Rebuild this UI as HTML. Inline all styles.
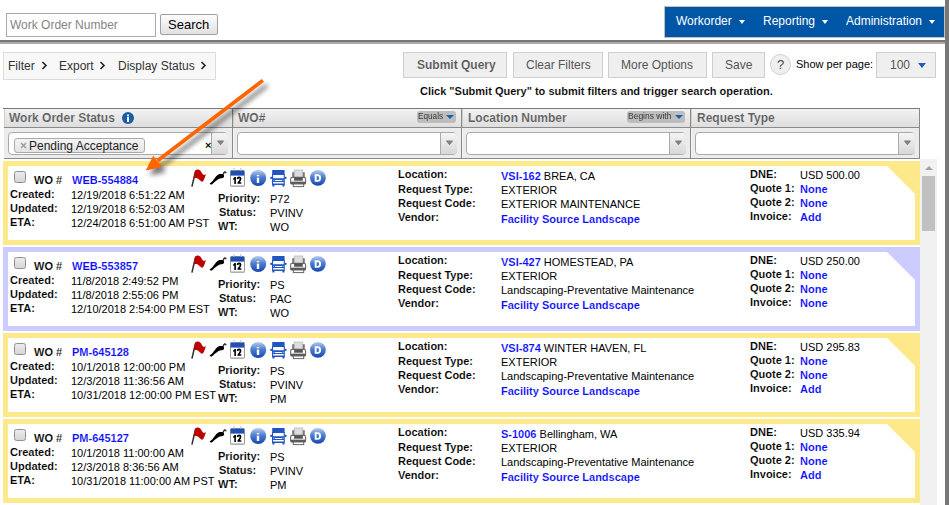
<!DOCTYPE html>
<html><head><meta charset="utf-8"><style>
html,body{margin:0;padding:0;background:#fff;width:949px;height:505px;overflow:hidden;position:relative}
body{font-family:'Liberation Sans',sans-serif;}
.t{position:absolute;white-space:nowrap;line-height:14px;font-family:'Liberation Sans',sans-serif;}
</style></head><body>
<div style="position:absolute;left:6px;top:13px;width:148px;height:22px;border:1px solid #a9a9a9;background:#fff"></div>
<div class="t" style="left:10px;top:18px;font-size:12px;font-weight:normal;color:#848484;">Work Order Number</div>
<div style="position:absolute;left:160px;top:14px;width:56px;height:19px;border:1px solid #a0a0a0;border-radius:2px;background:linear-gradient(#fdfdfd,#e1e1e1)"></div>
<div class="t" style="left:168px;top:18px;font-size:13px;font-weight:normal;color:#000;">Search</div>
<div style="position:absolute;left:664px;top:6px;width:281px;height:32px;background:#0056a6;border:1px solid #c4c0bc;box-sizing:border-box"></div>
<div class="t" style="left:676px;top:14px;font-size:12px;font-weight:normal;color:#fff;">Workorder</div>
<div class="t" style="left:763px;top:14px;font-size:12px;font-weight:normal;color:#fff;">Reporting</div>
<div class="t" style="left:846px;top:14px;font-size:12px;font-weight:normal;color:#fff;">Administration</div>
<div style="position:absolute;left:739px;top:20px;width:0;height:0;border-left:3px solid transparent;border-right:3px solid transparent;border-top:4px solid #fff"></div>
<div style="position:absolute;left:822px;top:20px;width:0;height:0;border-left:3px solid transparent;border-right:3px solid transparent;border-top:4px solid #fff"></div>
<div style="position:absolute;left:929px;top:20px;width:0;height:0;border-left:3px solid transparent;border-right:3px solid transparent;border-top:4px solid #fff"></div>
<div style="position:absolute;left:0px;top:40px;width:945px;height:2px;background:#777"></div>
<div style="position:absolute;left:0px;top:42px;width:945px;height:2px;background:#aaa"></div>
<div style="position:absolute;left:945px;top:0px;width:4px;height:505px;background:#787878"></div>
<div style="position:absolute;left:3px;top:52px;width:211px;height:26px;border:1px solid #dcdcdc;background:#f8f8f8"></div>
<div class="t" style="left:8px;top:59px;font-size:12px;font-weight:normal;color:#333;">Filter</div>
<div class="t" style="left:59px;top:59px;font-size:12px;font-weight:normal;color:#333;">Export</div>
<div class="t" style="left:118px;top:59px;font-size:12px;font-weight:normal;color:#333;">Display Status</div>
<svg style="position:absolute;left:41px;top:61px" width="7" height="9"><path d="M1.5 1 L5 4.5 L1.5 8" fill="none" stroke="#222" stroke-width="1.6"/></svg>
<svg style="position:absolute;left:99px;top:61px" width="7" height="9"><path d="M1.5 1 L5 4.5 L1.5 8" fill="none" stroke="#222" stroke-width="1.6"/></svg>
<svg style="position:absolute;left:200px;top:61px" width="7" height="9"><path d="M1.5 1 L5 4.5 L1.5 8" fill="none" stroke="#222" stroke-width="1.6"/></svg>
<div style="position:absolute;left:403px;top:52px;width:104px;height:26px;border:1px solid #cfcfcf;background:#efefef;box-sizing:border-box"></div>
<div class="t" style="left:417px;top:58px;font-size:12px;font-weight:bold;color:#555;-webkit-text-stroke:0.12px #efefef;">Submit Query</div>
<div style="position:absolute;left:513px;top:52px;width:90px;height:26px;border:1px solid #cfcfcf;background:#efefef;box-sizing:border-box"></div>
<div class="t" style="left:526px;top:58px;font-size:12px;font-weight:normal;color:#555;">Clear Filters</div>
<div style="position:absolute;left:608px;top:52px;width:99px;height:26px;border:1px solid #cfcfcf;background:#efefef;box-sizing:border-box"></div>
<div class="t" style="left:621px;top:58px;font-size:12px;font-weight:normal;color:#555;">More Options</div>
<div style="position:absolute;left:712px;top:52px;width:53px;height:26px;border:1px solid #cfcfcf;background:#efefef;box-sizing:border-box"></div>
<div class="t" style="left:725px;top:58px;font-size:12px;font-weight:normal;color:#555;">Save</div>
<div style="position:absolute;left:770px;top:54px;width:21px;height:21px;border:1px solid #cfcfcf;background:#efefef;border-radius:50%;box-sizing:border-box"></div>
<div class="t" style="left:777px;top:58px;font-size:13px;font-weight:normal;color:#444;">?</div>
<div class="t" style="left:796px;top:57px;font-size:11px;font-weight:normal;color:#000;">Show per page:</div>
<div style="position:absolute;left:876px;top:52px;width:60px;height:26px;border:1px solid #cfcfcf;background:#efefef;box-sizing:border-box"></div>
<div class="t" style="left:890px;top:58px;font-size:12px;font-weight:normal;color:#555;">100</div>
<div style="position:absolute;left:918px;top:63px;width:0;height:0;border-left:4px solid transparent;border-right:4px solid transparent;border-top:5px solid #1f5fb0"></div>
<div class="t" style="left:420px;top:84px;font-size:11px;font-weight:bold;color:#000;-webkit-text-stroke:0.12px #fff;">Click "Submit Query" to submit filters and trigger search operation.</div>
<div style="position:absolute;left:4px;top:108px;width:916px;height:51px;border:1px solid #8a8a8a;border-left:none;border-top-color:#7a7a7a;box-sizing:border-box;background:#ececec"></div>
<div style="position:absolute;left:3px;top:108px;width:1px;height:1px;background:#7a7a7a"></div>
<div style="position:absolute;left:4px;top:109px;width:915px;height:18px;background:linear-gradient(#f2f2f2,#dedede);border-left:1px solid #cfcfcf;box-sizing:border-box"></div>
<div style="position:absolute;left:4px;top:127px;width:916px;height:1px;background:#8a8a8a"></div>
<div style="position:absolute;left:232px;top:109px;width:1px;height:49px;background:#8a8a8a"></div>
<div style="position:absolute;left:233px;top:109px;width:1px;height:18px;background:#cfcfcf"></div>
<div style="position:absolute;left:233px;top:128px;width:1px;height:30px;background:#f4f4f4"></div>
<div style="position:absolute;left:461px;top:109px;width:1px;height:49px;background:#8a8a8a"></div>
<div style="position:absolute;left:462px;top:109px;width:1px;height:18px;background:#cfcfcf"></div>
<div style="position:absolute;left:462px;top:128px;width:1px;height:30px;background:#f4f4f4"></div>
<div style="position:absolute;left:690px;top:109px;width:1px;height:49px;background:#8a8a8a"></div>
<div style="position:absolute;left:691px;top:109px;width:1px;height:18px;background:#cfcfcf"></div>
<div style="position:absolute;left:691px;top:128px;width:1px;height:30px;background:#f4f4f4"></div>
<div class="t" style="left:9px;top:111px;font-size:12px;font-weight:bold;color:#5e5e5e;-webkit-text-stroke:0.12px #e8e8e8;">Work Order Status</div>
<svg style="position:absolute;left:122px;top:112px" width="12" height="12"><circle cx="6" cy="6" r="6" fill="#1a5ea8"/><rect x="5" y="5" width="2" height="5" fill="#fff"/><rect x="5" y="2.5" width="2" height="1.8" fill="#fff"/></svg>
<div class="t" style="left:238px;top:111px;font-size:12px;font-weight:bold;color:#5e5e5e;-webkit-text-stroke:0.12px #e8e8e8;">WO#</div>
<div class="t" style="left:468px;top:111px;font-size:12px;font-weight:bold;color:#5e5e5e;-webkit-text-stroke:0.12px #e8e8e8;">Location Number</div>
<div class="t" style="left:697px;top:111px;font-size:12px;font-weight:bold;color:#5e5e5e;-webkit-text-stroke:0.12px #e8e8e8;">Request Type</div>
<div style="position:absolute;left:417px;top:111px;width:39px;height:12px;background:#bdbdbd;border-radius:3px"></div>
<div class="t" style="left:418px;top:109px;font-size:9px;line-height:14px;color:#383838;transform:scaleX(0.913);transform-origin:0 0">Equals</div>
<div style="position:absolute;left:446px;top:115px;width:0;height:0;border-left:4px solid transparent;border-right:4px solid transparent;border-top:4px solid #1f5fb0"></div>
<div style="position:absolute;left:627px;top:111px;width:58px;height:12px;background:#bdbdbd;border-radius:3px"></div>
<div class="t" style="left:628px;top:109px;font-size:9px;line-height:14px;color:#383838;transform:scaleX(0.943);transform-origin:0 0">Begins with</div>
<div style="position:absolute;left:675px;top:115px;width:0;height:0;border-left:4px solid transparent;border-right:4px solid transparent;border-top:4px solid #1f5fb0"></div>
<div style="position:absolute;left:8px;top:132px;width:220px;height:23px;border:1px solid #aaa;border-radius:4px;background:#fff;box-sizing:border-box"></div>
<div style="position:absolute;left:211px;top:133px;width:16px;height:21px;border-left:1px solid #aaa;border-radius:0 3px 3px 0;background:linear-gradient(#f4f4f4,#d8d8d8)"></div>
<svg style="position:absolute;left:217px;top:140px" width="7" height="6"><path d="M0.3 0.5 H6.7 V1.6 L3.5 5.2 L0.3 1.6 Z" fill="#808080"/></svg>
<div style="position:absolute;left:237px;top:132px;width:220px;height:23px;border:1px solid #aaa;border-radius:4px;background:#fff;box-sizing:border-box"></div>
<div style="position:absolute;left:440px;top:133px;width:16px;height:21px;border-left:1px solid #aaa;border-radius:0 3px 3px 0;background:linear-gradient(#f4f4f4,#d8d8d8)"></div>
<svg style="position:absolute;left:446px;top:140px" width="7" height="6"><path d="M0.3 0.5 H6.7 V1.6 L3.5 5.2 L0.3 1.6 Z" fill="#808080"/></svg>
<div style="position:absolute;left:466px;top:132px;width:220px;height:23px;border:1px solid #aaa;border-radius:4px;background:#fff;box-sizing:border-box"></div>
<div style="position:absolute;left:669px;top:133px;width:16px;height:21px;border-left:1px solid #aaa;border-radius:0 3px 3px 0;background:linear-gradient(#f4f4f4,#d8d8d8)"></div>
<svg style="position:absolute;left:675px;top:140px" width="7" height="6"><path d="M0.3 0.5 H6.7 V1.6 L3.5 5.2 L0.3 1.6 Z" fill="#808080"/></svg>
<div style="position:absolute;left:695px;top:132px;width:220px;height:23px;border:1px solid #aaa;border-radius:4px;background:#fff;box-sizing:border-box"></div>
<div style="position:absolute;left:898px;top:133px;width:16px;height:21px;border-left:1px solid #aaa;border-radius:0 3px 3px 0;background:linear-gradient(#f4f4f4,#d8d8d8)"></div>
<svg style="position:absolute;left:904px;top:140px" width="7" height="6"><path d="M0.3 0.5 H6.7 V1.6 L3.5 5.2 L0.3 1.6 Z" fill="#808080"/></svg>
<div style="position:absolute;left:14px;top:138px;width:131px;height:15px;border:1px solid #aaa;border-radius:3px;background:linear-gradient(#f4f4f4,#e4e4e4);box-sizing:border-box"></div>
<svg style="position:absolute;left:20px;top:142px" width="7" height="7"><path d="M1 1L6 6M6 1L1 6" stroke="#999" stroke-width="1.4"/></svg>
<div class="t" style="left:29px;top:139px;font-size:12px;font-weight:normal;color:#222;">Pending Acceptance</div>
<div class="t" style="left:205px;top:138px;font-size:11px;font-weight:bold;color:#111;">×</div>
<div style="position:absolute;left:920px;top:159px;width:17px;height:346px;background:#f1f1f1"></div>
<div style="position:absolute;left:924.5px;top:165.5px;width:0;height:0;border-left:4px solid transparent;border-right:4px solid transparent;border-bottom:4.5px solid #a3a3a3"></div>
<div style="position:absolute;left:922px;top:176px;width:13px;height:55px;background:#c1c1c1"></div>
<div style="position:absolute;left:3px;top:161px;width:917px;height:84px;background:#fee98a"></div>
<div style="position:absolute;left:8px;top:166px;width:907px;height:74px;background:#fff;clip-path:polygon(0 0,879px 0,907px 28px,907px 74px,0 74px)"></div>
<div style="position:absolute;left:14px;top:171px;width:12px;height:12px;border:1px solid #8e8e8e;border-radius:2.5px;background:linear-gradient(#ececec,#d6d6d6);box-sizing:border-box"></div>
<div class="t" style="left:34px;top:173px;font-size:11px;font-weight:bold;color:#000;-webkit-text-stroke:0.12px #fff;">WO #</div>
<div class="t" style="left:72px;top:173px;font-size:11px;font-weight:bold;color:#0a0aff;-webkit-text-stroke:0.12px #fff;">WEB-554884</div>
<div class="t" style="left:10px;top:187px;font-size:11px;font-weight:bold;color:#000;-webkit-text-stroke:0.12px #fff;">Created:</div>
<div class="t" style="left:71px;top:188px;font-size:11px;font-weight:normal;color:#000;">12/19/2018 6:51:22 AM</div>
<div class="t" style="left:10px;top:201px;font-size:11px;font-weight:bold;color:#000;-webkit-text-stroke:0.12px #fff;">Updated:</div>
<div class="t" style="left:71px;top:202px;font-size:11px;font-weight:normal;color:#000;">12/19/2018 6:52:03 AM</div>
<div class="t" style="left:10px;top:215px;font-size:11px;font-weight:bold;color:#000;-webkit-text-stroke:0.12px #fff;">ETA:</div>
<div class="t" style="left:71px;top:216px;font-size:11px;font-weight:normal;color:#000;">12/24/2018 6:51:00 AM PST</div>
<div class="t" style="left:218px;top:191px;font-size:11px;font-weight:bold;color:#000;-webkit-text-stroke:0.12px #fff;">Priority:</div>
<div class="t" style="left:270px;top:192px;font-size:11px;font-weight:normal;color:#000;">P72</div>
<div class="t" style="left:219px;top:205px;font-size:11px;font-weight:bold;color:#000;-webkit-text-stroke:0.12px #fff;">Status:</div>
<div class="t" style="left:270px;top:206px;font-size:11px;font-weight:normal;color:#000;">PVINV</div>
<div class="t" style="left:218px;top:219px;font-size:11px;font-weight:bold;color:#000;-webkit-text-stroke:0.12px #fff;">WT:</div>
<div class="t" style="left:270px;top:220px;font-size:11px;font-weight:normal;color:#000;">WO</div>
<div class="t" style="left:398px;top:167px;font-size:11px;font-weight:bold;color:#000;-webkit-text-stroke:0.12px #fff;">Location:</div>
<div class="t" style="left:501px;top:169px;font-size:11px;font-weight:normal;color:#000;"><b style="color:#0a0aff;-webkit-text-stroke:0.12px #fff">VSI-162</b> BREA, CA</div>
<div class="t" style="left:398px;top:182px;font-size:11px;font-weight:bold;color:#000;-webkit-text-stroke:0.12px #fff;">Request Type:</div>
<div class="t" style="left:501px;top:183px;font-size:11px;font-weight:normal;color:#000;">EXTERIOR</div>
<div class="t" style="left:398px;top:196px;font-size:11px;font-weight:bold;color:#000;-webkit-text-stroke:0.12px #fff;">Request Code:</div>
<div class="t" style="left:501px;top:197px;font-size:11px;font-weight:normal;color:#000;">EXTERIOR MAINTENANCE</div>
<div class="t" style="left:398px;top:210px;font-size:11px;font-weight:bold;color:#000;-webkit-text-stroke:0.12px #fff;">Vendor:</div>
<div class="t" style="left:501px;top:212px;font-size:11px;font-weight:bold;color:#0a0aff;-webkit-text-stroke:0.12px #fff;">Facility Source Landscape</div>
<div class="t" style="left:750px;top:167px;font-size:11px;font-weight:bold;color:#000;-webkit-text-stroke:0.12px #fff;">DNE:</div>
<div class="t" style="left:800px;top:168px;font-size:11px;font-weight:normal;color:#000;">USD 500.00</div>
<div class="t" style="left:750px;top:181px;font-size:11px;font-weight:bold;color:#000;-webkit-text-stroke:0.12px #fff;">Quote 1:</div>
<div class="t" style="left:800px;top:182px;font-size:11px;font-weight:bold;color:#0a0aff;-webkit-text-stroke:0.12px #fff;">None</div>
<div class="t" style="left:750px;top:195px;font-size:11px;font-weight:bold;color:#000;-webkit-text-stroke:0.12px #fff;">Quote 2:</div>
<div class="t" style="left:800px;top:196px;font-size:11px;font-weight:bold;color:#0a0aff;-webkit-text-stroke:0.12px #fff;">None</div>
<div class="t" style="left:750px;top:209px;font-size:11px;font-weight:bold;color:#000;-webkit-text-stroke:0.12px #fff;">Invoice:</div>
<div class="t" style="left:800px;top:210px;font-size:11px;font-weight:bold;color:#0a0aff;-webkit-text-stroke:0.12px #fff;">Add</div>
<svg style="position:absolute;left:188px;top:166px" width="145" height="25" viewBox="0 0 145 25">
<defs>
<linearGradient id="bg161" x1="0" y1="0" x2="0" y2="1"><stop offset="0" stop-color="#b9cdee"/><stop offset="0.45" stop-color="#4f7fd0"/><stop offset="1" stop-color="#1546b0"/></linearGradient>
</defs>
<path d="M3.9 20.6 L7.6 5" stroke="#2e2e2e" stroke-width="1.5" fill="none"/>
<path d="M7.3 4.2 C9 3.2 11 3.4 12.2 4.6 C13.3 5.8 14.5 8.5 15.8 8.9 L17.9 8.2 L17 11 C16.2 13.5 15.2 15.5 14.2 15.8 C13 15.5 12 14.4 11 13.5 C9.6 12.2 7.8 11.6 5.5 12.6 Z" fill="#bf0000"/>
<path d="M21.6 17.6 C22.5 16.8 23.5 16.2 24.1 15.5 C25 14.5 26 12.8 26.9 11.9 C27.8 10.8 28.5 9.8 29.3 9.3 C30 8.6 30.6 8.1 31.5 8 L34.8 8.1 L35.9 9 L36.1 11 L34.8 12.1 L32 12.6 C31 12.9 30.2 13.3 29.3 13.9 C28.3 14.6 27.3 15.2 26.5 15.9 C25.8 16.6 25.2 17.4 24.5 18 C23.5 18.8 22 18.8 21.6 17.6 Z" fill="#000"/><path d="M35.2 8.6 Q35.6 6.4 36.7 5.9 Q37.9 5.8 37.8 7.3" stroke="#2a2a2a" stroke-width="1.5" fill="none"/>
<g transform="translate(40,0)">
<rect x="2.5" y="4.5" width="14" height="15.8" rx="1" fill="#fff" stroke="#9a9a9a" stroke-width="1"/>
<rect x="2.6" y="4.6" width="13.6" height="5" fill="#1e50b6"/>
<rect x="5.3" y="2" width="1.2" height="2.6" fill="#c8c8c8"/>
<rect x="12.2" y="2" width="1.2" height="2.6" fill="#c8c8c8"/>
<rect x="2.5" y="19.5" width="14" height="1.2" fill="#b0b0b0"/>
<path d="M5.2 12.6 L6.6 11 H7.9 V18 H6.3 V13.4 L5.2 14 Z" fill="#000"/><path d="M9.4 13 Q9.7 11.3 11.1 11.3 Q12.6 11.3 12.6 12.8 Q12.6 14.1 10.2 17 H13.3" stroke="#000" stroke-width="1.7" fill="none" stroke-linejoin="round"/>
<circle cx="30.2" cy="12" r="8" fill="url(#bg161)"/>
<rect x="28.8" y="9" width="2.4" height="1.3" fill="#fff"/>
<rect x="28.8" y="11.6" width="2.4" height="5.3" fill="#fff"/>
</g>
<g transform="translate(80,0)" fill="#1f56c2">
<rect x="4.2" y="4" width="12.4" height="4.5" rx="0.5"/>
<path d="M4 8 H16.8 V19 H4 Z M5.1 8.9 V12.3 H15.7 V8.9 Z M7.1 13.9 V15.1 H13.9 V13.9 Z M5.1 16 V17.4 H15.7 V16 Z" fill-rule="evenodd"/>
<rect x="5.2" y="13.8" width="1.2" height="1.2" fill="#9fb6e6"/>
<rect x="14.5" y="13.8" width="1.2" height="1.2" fill="#9fb6e6"/>
<rect x="2.2" y="10.7" width="2.2" height="2.4" rx="1"/>
<rect x="16.4" y="10.7" width="2.2" height="2.4" rx="1"/>
<rect x="4.4" y="18.6" width="2.1" height="2" rx="0.7"/>
<rect x="14.4" y="18.6" width="2.1" height="2" rx="0.7"/>
</g>
<g transform="translate(80,0)">
<rect x="26.2" y="4" width="8.6" height="7.5" fill="#dcdcdc" stroke="#bdbdbd" stroke-width="0.8"/>
<rect x="24.2" y="6.2" width="2" height="4.8" fill="#7a7a7a"/>
<rect x="34.8" y="6.2" width="2" height="4.8" fill="#7a7a7a"/>
<rect x="22.6" y="11.4" width="15" height="6.6" rx="1.5" fill="#fff" stroke="#6a6a6a" stroke-width="1.1"/>
<rect x="26.1" y="11.4" width="8.7" height="3.4" fill="#555"/>
<rect x="23.2" y="14.8" width="13.8" height="1.3" fill="#c4c4c4"/>
<rect x="22.6" y="16" width="15" height="2.2" fill="#5a5a5a"/>
<rect x="25.3" y="18" width="10.4" height="2.6" fill="#fff" stroke="#666" stroke-width="1"/>
</g>
<g transform="translate(112,0)">
<circle cx="17.9" cy="11.8" r="7.9" fill="url(#bg161)"/>
<path d="M14.7 8.3 H17.6 C20 8.3 21.1 9.7 21.1 12 C21.1 14.3 20 15.7 17.6 15.7 H14.7 Z M16.6 9.9 V14.1 H17.4 C18.6 14.1 19.1 13.4 19.1 12 C19.1 10.6 18.6 9.9 17.4 9.9 Z" fill="#fff" fill-rule="evenodd"/>
</g>
</svg>
<div style="position:absolute;left:3px;top:247px;width:917px;height:84px;background:#ccccff"></div>
<div style="position:absolute;left:8px;top:252px;width:907px;height:74px;background:#fff;clip-path:polygon(0 0,879px 0,907px 28px,907px 74px,0 74px)"></div>
<div style="position:absolute;left:14px;top:257px;width:12px;height:12px;border:1px solid #8e8e8e;border-radius:2.5px;background:linear-gradient(#ececec,#d6d6d6);box-sizing:border-box"></div>
<div class="t" style="left:34px;top:259px;font-size:11px;font-weight:bold;color:#000;-webkit-text-stroke:0.12px #fff;">WO #</div>
<div class="t" style="left:72px;top:259px;font-size:11px;font-weight:bold;color:#0a0aff;-webkit-text-stroke:0.12px #fff;">WEB-553857</div>
<div class="t" style="left:10px;top:273px;font-size:11px;font-weight:bold;color:#000;-webkit-text-stroke:0.12px #fff;">Created:</div>
<div class="t" style="left:71px;top:274px;font-size:11px;font-weight:normal;color:#000;">11/8/2018 2:49:52 PM</div>
<div class="t" style="left:10px;top:287px;font-size:11px;font-weight:bold;color:#000;-webkit-text-stroke:0.12px #fff;">Updated:</div>
<div class="t" style="left:71px;top:288px;font-size:11px;font-weight:normal;color:#000;">11/8/2018 2:55:06 PM</div>
<div class="t" style="left:10px;top:301px;font-size:11px;font-weight:bold;color:#000;-webkit-text-stroke:0.12px #fff;">ETA:</div>
<div class="t" style="left:71px;top:302px;font-size:11px;font-weight:normal;color:#000;">12/10/2018 2:54:00 PM EST</div>
<div class="t" style="left:218px;top:277px;font-size:11px;font-weight:bold;color:#000;-webkit-text-stroke:0.12px #fff;">Priority:</div>
<div class="t" style="left:270px;top:278px;font-size:11px;font-weight:normal;color:#000;">PS</div>
<div class="t" style="left:219px;top:291px;font-size:11px;font-weight:bold;color:#000;-webkit-text-stroke:0.12px #fff;">Status:</div>
<div class="t" style="left:270px;top:292px;font-size:11px;font-weight:normal;color:#000;">PAC</div>
<div class="t" style="left:218px;top:305px;font-size:11px;font-weight:bold;color:#000;-webkit-text-stroke:0.12px #fff;">WT:</div>
<div class="t" style="left:270px;top:306px;font-size:11px;font-weight:normal;color:#000;">WO</div>
<div class="t" style="left:398px;top:253px;font-size:11px;font-weight:bold;color:#000;-webkit-text-stroke:0.12px #fff;">Location:</div>
<div class="t" style="left:501px;top:255px;font-size:11px;font-weight:normal;color:#000;"><b style="color:#0a0aff;-webkit-text-stroke:0.12px #fff">VSI-427</b> HOMESTEAD, PA</div>
<div class="t" style="left:398px;top:268px;font-size:11px;font-weight:bold;color:#000;-webkit-text-stroke:0.12px #fff;">Request Type:</div>
<div class="t" style="left:501px;top:269px;font-size:11px;font-weight:normal;color:#000;">EXTERIOR</div>
<div class="t" style="left:398px;top:282px;font-size:11px;font-weight:bold;color:#000;-webkit-text-stroke:0.12px #fff;">Request Code:</div>
<div class="t" style="left:501px;top:283px;font-size:11px;font-weight:normal;color:#000;">Landscaping-Preventative Maintenance</div>
<div class="t" style="left:398px;top:296px;font-size:11px;font-weight:bold;color:#000;-webkit-text-stroke:0.12px #fff;">Vendor:</div>
<div class="t" style="left:501px;top:298px;font-size:11px;font-weight:bold;color:#0a0aff;-webkit-text-stroke:0.12px #fff;">Facility Source Landscape</div>
<div class="t" style="left:750px;top:253px;font-size:11px;font-weight:bold;color:#000;-webkit-text-stroke:0.12px #fff;">DNE:</div>
<div class="t" style="left:800px;top:254px;font-size:11px;font-weight:normal;color:#000;">USD 250.00</div>
<div class="t" style="left:750px;top:267px;font-size:11px;font-weight:bold;color:#000;-webkit-text-stroke:0.12px #fff;">Quote 1:</div>
<div class="t" style="left:800px;top:268px;font-size:11px;font-weight:bold;color:#0a0aff;-webkit-text-stroke:0.12px #fff;">None</div>
<div class="t" style="left:750px;top:281px;font-size:11px;font-weight:bold;color:#000;-webkit-text-stroke:0.12px #fff;">Quote 2:</div>
<div class="t" style="left:800px;top:282px;font-size:11px;font-weight:bold;color:#0a0aff;-webkit-text-stroke:0.12px #fff;">None</div>
<div class="t" style="left:750px;top:295px;font-size:11px;font-weight:bold;color:#000;-webkit-text-stroke:0.12px #fff;">Invoice:</div>
<div class="t" style="left:800px;top:296px;font-size:11px;font-weight:bold;color:#0a0aff;-webkit-text-stroke:0.12px #fff;">None</div>
<svg style="position:absolute;left:188px;top:252px" width="145" height="25" viewBox="0 0 145 25">
<defs>
<linearGradient id="bg247" x1="0" y1="0" x2="0" y2="1"><stop offset="0" stop-color="#b9cdee"/><stop offset="0.45" stop-color="#4f7fd0"/><stop offset="1" stop-color="#1546b0"/></linearGradient>
</defs>
<path d="M3.9 20.6 L7.6 5" stroke="#2e2e2e" stroke-width="1.5" fill="none"/>
<path d="M7.3 4.2 C9 3.2 11 3.4 12.2 4.6 C13.3 5.8 14.5 8.5 15.8 8.9 L17.9 8.2 L17 11 C16.2 13.5 15.2 15.5 14.2 15.8 C13 15.5 12 14.4 11 13.5 C9.6 12.2 7.8 11.6 5.5 12.6 Z" fill="#bf0000"/>
<path d="M21.6 17.6 C22.5 16.8 23.5 16.2 24.1 15.5 C25 14.5 26 12.8 26.9 11.9 C27.8 10.8 28.5 9.8 29.3 9.3 C30 8.6 30.6 8.1 31.5 8 L34.8 8.1 L35.9 9 L36.1 11 L34.8 12.1 L32 12.6 C31 12.9 30.2 13.3 29.3 13.9 C28.3 14.6 27.3 15.2 26.5 15.9 C25.8 16.6 25.2 17.4 24.5 18 C23.5 18.8 22 18.8 21.6 17.6 Z" fill="#000"/><path d="M35.2 8.6 Q35.6 6.4 36.7 5.9 Q37.9 5.8 37.8 7.3" stroke="#2a2a2a" stroke-width="1.5" fill="none"/>
<g transform="translate(40,0)">
<rect x="2.5" y="4.5" width="14" height="15.8" rx="1" fill="#fff" stroke="#9a9a9a" stroke-width="1"/>
<rect x="2.6" y="4.6" width="13.6" height="5" fill="#1e50b6"/>
<rect x="5.3" y="2" width="1.2" height="2.6" fill="#c8c8c8"/>
<rect x="12.2" y="2" width="1.2" height="2.6" fill="#c8c8c8"/>
<rect x="2.5" y="19.5" width="14" height="1.2" fill="#b0b0b0"/>
<path d="M5.2 12.6 L6.6 11 H7.9 V18 H6.3 V13.4 L5.2 14 Z" fill="#000"/><path d="M9.4 13 Q9.7 11.3 11.1 11.3 Q12.6 11.3 12.6 12.8 Q12.6 14.1 10.2 17 H13.3" stroke="#000" stroke-width="1.7" fill="none" stroke-linejoin="round"/>
<circle cx="30.2" cy="12" r="8" fill="url(#bg247)"/>
<rect x="28.8" y="9" width="2.4" height="1.3" fill="#fff"/>
<rect x="28.8" y="11.6" width="2.4" height="5.3" fill="#fff"/>
</g>
<g transform="translate(80,0)" fill="#1f56c2">
<rect x="4.2" y="4" width="12.4" height="4.5" rx="0.5"/>
<path d="M4 8 H16.8 V19 H4 Z M5.1 8.9 V12.3 H15.7 V8.9 Z M7.1 13.9 V15.1 H13.9 V13.9 Z M5.1 16 V17.4 H15.7 V16 Z" fill-rule="evenodd"/>
<rect x="5.2" y="13.8" width="1.2" height="1.2" fill="#9fb6e6"/>
<rect x="14.5" y="13.8" width="1.2" height="1.2" fill="#9fb6e6"/>
<rect x="2.2" y="10.7" width="2.2" height="2.4" rx="1"/>
<rect x="16.4" y="10.7" width="2.2" height="2.4" rx="1"/>
<rect x="4.4" y="18.6" width="2.1" height="2" rx="0.7"/>
<rect x="14.4" y="18.6" width="2.1" height="2" rx="0.7"/>
</g>
<g transform="translate(80,0)">
<rect x="26.2" y="4" width="8.6" height="7.5" fill="#dcdcdc" stroke="#bdbdbd" stroke-width="0.8"/>
<rect x="24.2" y="6.2" width="2" height="4.8" fill="#7a7a7a"/>
<rect x="34.8" y="6.2" width="2" height="4.8" fill="#7a7a7a"/>
<rect x="22.6" y="11.4" width="15" height="6.6" rx="1.5" fill="#fff" stroke="#6a6a6a" stroke-width="1.1"/>
<rect x="26.1" y="11.4" width="8.7" height="3.4" fill="#555"/>
<rect x="23.2" y="14.8" width="13.8" height="1.3" fill="#c4c4c4"/>
<rect x="22.6" y="16" width="15" height="2.2" fill="#5a5a5a"/>
<rect x="25.3" y="18" width="10.4" height="2.6" fill="#fff" stroke="#666" stroke-width="1"/>
</g>
<g transform="translate(112,0)">
<circle cx="17.9" cy="11.8" r="7.9" fill="url(#bg247)"/>
<path d="M14.7 8.3 H17.6 C20 8.3 21.1 9.7 21.1 12 C21.1 14.3 20 15.7 17.6 15.7 H14.7 Z M16.6 9.9 V14.1 H17.4 C18.6 14.1 19.1 13.4 19.1 12 C19.1 10.6 18.6 9.9 17.4 9.9 Z" fill="#fff" fill-rule="evenodd"/>
</g>
</svg>
<div style="position:absolute;left:3px;top:333px;width:917px;height:84px;background:#fee98a"></div>
<div style="position:absolute;left:8px;top:338px;width:907px;height:74px;background:#fff;clip-path:polygon(0 0,879px 0,907px 28px,907px 74px,0 74px)"></div>
<div style="position:absolute;left:14px;top:343px;width:12px;height:12px;border:1px solid #8e8e8e;border-radius:2.5px;background:linear-gradient(#ececec,#d6d6d6);box-sizing:border-box"></div>
<div class="t" style="left:34px;top:345px;font-size:11px;font-weight:bold;color:#000;-webkit-text-stroke:0.12px #fff;">WO #</div>
<div class="t" style="left:72px;top:345px;font-size:11px;font-weight:bold;color:#0a0aff;-webkit-text-stroke:0.12px #fff;">PM-645128</div>
<div class="t" style="left:10px;top:359px;font-size:11px;font-weight:bold;color:#000;-webkit-text-stroke:0.12px #fff;">Created:</div>
<div class="t" style="left:71px;top:360px;font-size:11px;font-weight:normal;color:#000;">10/1/2018 12:00:00 PM</div>
<div class="t" style="left:10px;top:373px;font-size:11px;font-weight:bold;color:#000;-webkit-text-stroke:0.12px #fff;">Updated:</div>
<div class="t" style="left:71px;top:374px;font-size:11px;font-weight:normal;color:#000;">12/3/2018 11:36:56 AM</div>
<div class="t" style="left:10px;top:387px;font-size:11px;font-weight:bold;color:#000;-webkit-text-stroke:0.12px #fff;">ETA:</div>
<div class="t" style="left:71px;top:388px;font-size:11px;font-weight:normal;color:#000;">10/31/2018 12:00:00 PM EST</div>
<div class="t" style="left:218px;top:363px;font-size:11px;font-weight:bold;color:#000;-webkit-text-stroke:0.12px #fff;">Priority:</div>
<div class="t" style="left:270px;top:364px;font-size:11px;font-weight:normal;color:#000;">PS</div>
<div class="t" style="left:219px;top:377px;font-size:11px;font-weight:bold;color:#000;-webkit-text-stroke:0.12px #fff;">Status:</div>
<div class="t" style="left:270px;top:378px;font-size:11px;font-weight:normal;color:#000;">PVINV</div>
<div class="t" style="left:218px;top:391px;font-size:11px;font-weight:bold;color:#000;-webkit-text-stroke:0.12px #fff;">WT:</div>
<div class="t" style="left:270px;top:392px;font-size:11px;font-weight:normal;color:#000;">PM</div>
<div class="t" style="left:398px;top:339px;font-size:11px;font-weight:bold;color:#000;-webkit-text-stroke:0.12px #fff;">Location:</div>
<div class="t" style="left:501px;top:341px;font-size:11px;font-weight:normal;color:#000;"><b style="color:#0a0aff;-webkit-text-stroke:0.12px #fff">VSI-874</b> WINTER HAVEN, FL</div>
<div class="t" style="left:398px;top:354px;font-size:11px;font-weight:bold;color:#000;-webkit-text-stroke:0.12px #fff;">Request Type:</div>
<div class="t" style="left:501px;top:355px;font-size:11px;font-weight:normal;color:#000;">EXTERIOR</div>
<div class="t" style="left:398px;top:368px;font-size:11px;font-weight:bold;color:#000;-webkit-text-stroke:0.12px #fff;">Request Code:</div>
<div class="t" style="left:501px;top:369px;font-size:11px;font-weight:normal;color:#000;">Landscaping-Preventative Maintenance</div>
<div class="t" style="left:398px;top:382px;font-size:11px;font-weight:bold;color:#000;-webkit-text-stroke:0.12px #fff;">Vendor:</div>
<div class="t" style="left:501px;top:384px;font-size:11px;font-weight:bold;color:#0a0aff;-webkit-text-stroke:0.12px #fff;">Facility Source Landscape</div>
<div class="t" style="left:750px;top:339px;font-size:11px;font-weight:bold;color:#000;-webkit-text-stroke:0.12px #fff;">DNE:</div>
<div class="t" style="left:800px;top:340px;font-size:11px;font-weight:normal;color:#000;">USD 295.83</div>
<div class="t" style="left:750px;top:353px;font-size:11px;font-weight:bold;color:#000;-webkit-text-stroke:0.12px #fff;">Quote 1:</div>
<div class="t" style="left:800px;top:354px;font-size:11px;font-weight:bold;color:#0a0aff;-webkit-text-stroke:0.12px #fff;">None</div>
<div class="t" style="left:750px;top:367px;font-size:11px;font-weight:bold;color:#000;-webkit-text-stroke:0.12px #fff;">Quote 2:</div>
<div class="t" style="left:800px;top:368px;font-size:11px;font-weight:bold;color:#0a0aff;-webkit-text-stroke:0.12px #fff;">None</div>
<div class="t" style="left:750px;top:381px;font-size:11px;font-weight:bold;color:#000;-webkit-text-stroke:0.12px #fff;">Invoice:</div>
<div class="t" style="left:800px;top:382px;font-size:11px;font-weight:bold;color:#0a0aff;-webkit-text-stroke:0.12px #fff;">Add</div>
<svg style="position:absolute;left:188px;top:338px" width="145" height="25" viewBox="0 0 145 25">
<defs>
<linearGradient id="bg333" x1="0" y1="0" x2="0" y2="1"><stop offset="0" stop-color="#b9cdee"/><stop offset="0.45" stop-color="#4f7fd0"/><stop offset="1" stop-color="#1546b0"/></linearGradient>
</defs>
<path d="M3.9 20.6 L7.6 5" stroke="#2e2e2e" stroke-width="1.5" fill="none"/>
<path d="M7.3 4.2 C9 3.2 11 3.4 12.2 4.6 C13.3 5.8 14.5 8.5 15.8 8.9 L17.9 8.2 L17 11 C16.2 13.5 15.2 15.5 14.2 15.8 C13 15.5 12 14.4 11 13.5 C9.6 12.2 7.8 11.6 5.5 12.6 Z" fill="#bf0000"/>
<path d="M21.6 17.6 C22.5 16.8 23.5 16.2 24.1 15.5 C25 14.5 26 12.8 26.9 11.9 C27.8 10.8 28.5 9.8 29.3 9.3 C30 8.6 30.6 8.1 31.5 8 L34.8 8.1 L35.9 9 L36.1 11 L34.8 12.1 L32 12.6 C31 12.9 30.2 13.3 29.3 13.9 C28.3 14.6 27.3 15.2 26.5 15.9 C25.8 16.6 25.2 17.4 24.5 18 C23.5 18.8 22 18.8 21.6 17.6 Z" fill="#000"/><path d="M35.2 8.6 Q35.6 6.4 36.7 5.9 Q37.9 5.8 37.8 7.3" stroke="#2a2a2a" stroke-width="1.5" fill="none"/>
<g transform="translate(40,0)">
<rect x="2.5" y="4.5" width="14" height="15.8" rx="1" fill="#fff" stroke="#9a9a9a" stroke-width="1"/>
<rect x="2.6" y="4.6" width="13.6" height="5" fill="#1e50b6"/>
<rect x="5.3" y="2" width="1.2" height="2.6" fill="#c8c8c8"/>
<rect x="12.2" y="2" width="1.2" height="2.6" fill="#c8c8c8"/>
<rect x="2.5" y="19.5" width="14" height="1.2" fill="#b0b0b0"/>
<path d="M5.2 12.6 L6.6 11 H7.9 V18 H6.3 V13.4 L5.2 14 Z" fill="#000"/><path d="M9.4 13 Q9.7 11.3 11.1 11.3 Q12.6 11.3 12.6 12.8 Q12.6 14.1 10.2 17 H13.3" stroke="#000" stroke-width="1.7" fill="none" stroke-linejoin="round"/>
<circle cx="30.2" cy="12" r="8" fill="url(#bg333)"/>
<rect x="28.8" y="9" width="2.4" height="1.3" fill="#fff"/>
<rect x="28.8" y="11.6" width="2.4" height="5.3" fill="#fff"/>
</g>
<g transform="translate(80,0)" fill="#1f56c2">
<rect x="4.2" y="4" width="12.4" height="4.5" rx="0.5"/>
<path d="M4 8 H16.8 V19 H4 Z M5.1 8.9 V12.3 H15.7 V8.9 Z M7.1 13.9 V15.1 H13.9 V13.9 Z M5.1 16 V17.4 H15.7 V16 Z" fill-rule="evenodd"/>
<rect x="5.2" y="13.8" width="1.2" height="1.2" fill="#9fb6e6"/>
<rect x="14.5" y="13.8" width="1.2" height="1.2" fill="#9fb6e6"/>
<rect x="2.2" y="10.7" width="2.2" height="2.4" rx="1"/>
<rect x="16.4" y="10.7" width="2.2" height="2.4" rx="1"/>
<rect x="4.4" y="18.6" width="2.1" height="2" rx="0.7"/>
<rect x="14.4" y="18.6" width="2.1" height="2" rx="0.7"/>
</g>
<g transform="translate(80,0)">
<rect x="26.2" y="4" width="8.6" height="7.5" fill="#dcdcdc" stroke="#bdbdbd" stroke-width="0.8"/>
<rect x="24.2" y="6.2" width="2" height="4.8" fill="#7a7a7a"/>
<rect x="34.8" y="6.2" width="2" height="4.8" fill="#7a7a7a"/>
<rect x="22.6" y="11.4" width="15" height="6.6" rx="1.5" fill="#fff" stroke="#6a6a6a" stroke-width="1.1"/>
<rect x="26.1" y="11.4" width="8.7" height="3.4" fill="#555"/>
<rect x="23.2" y="14.8" width="13.8" height="1.3" fill="#c4c4c4"/>
<rect x="22.6" y="16" width="15" height="2.2" fill="#5a5a5a"/>
<rect x="25.3" y="18" width="10.4" height="2.6" fill="#fff" stroke="#666" stroke-width="1"/>
</g>
<g transform="translate(112,0)">
<circle cx="17.9" cy="11.8" r="7.9" fill="url(#bg333)"/>
<path d="M14.7 8.3 H17.6 C20 8.3 21.1 9.7 21.1 12 C21.1 14.3 20 15.7 17.6 15.7 H14.7 Z M16.6 9.9 V14.1 H17.4 C18.6 14.1 19.1 13.4 19.1 12 C19.1 10.6 18.6 9.9 17.4 9.9 Z" fill="#fff" fill-rule="evenodd"/>
</g>
</svg>
<div style="position:absolute;left:3px;top:419px;width:917px;height:84px;background:#fee98a"></div>
<div style="position:absolute;left:8px;top:424px;width:907px;height:74px;background:#fff;clip-path:polygon(0 0,879px 0,907px 28px,907px 74px,0 74px)"></div>
<div style="position:absolute;left:14px;top:429px;width:12px;height:12px;border:1px solid #8e8e8e;border-radius:2.5px;background:linear-gradient(#ececec,#d6d6d6);box-sizing:border-box"></div>
<div class="t" style="left:34px;top:431px;font-size:11px;font-weight:bold;color:#000;-webkit-text-stroke:0.12px #fff;">WO #</div>
<div class="t" style="left:72px;top:431px;font-size:11px;font-weight:bold;color:#0a0aff;-webkit-text-stroke:0.12px #fff;">PM-645127</div>
<div class="t" style="left:10px;top:445px;font-size:11px;font-weight:bold;color:#000;-webkit-text-stroke:0.12px #fff;">Created:</div>
<div class="t" style="left:71px;top:446px;font-size:11px;font-weight:normal;color:#000;">10/1/2018 11:00:00 AM</div>
<div class="t" style="left:10px;top:459px;font-size:11px;font-weight:bold;color:#000;-webkit-text-stroke:0.12px #fff;">Updated:</div>
<div class="t" style="left:71px;top:460px;font-size:11px;font-weight:normal;color:#000;">12/3/2018 8:36:56 AM</div>
<div class="t" style="left:10px;top:473px;font-size:11px;font-weight:bold;color:#000;-webkit-text-stroke:0.12px #fff;">ETA:</div>
<div class="t" style="left:71px;top:474px;font-size:11px;font-weight:normal;color:#000;">10/31/2018 11:00:00 AM PST</div>
<div class="t" style="left:218px;top:449px;font-size:11px;font-weight:bold;color:#000;-webkit-text-stroke:0.12px #fff;">Priority:</div>
<div class="t" style="left:270px;top:450px;font-size:11px;font-weight:normal;color:#000;">PS</div>
<div class="t" style="left:219px;top:463px;font-size:11px;font-weight:bold;color:#000;-webkit-text-stroke:0.12px #fff;">Status:</div>
<div class="t" style="left:270px;top:464px;font-size:11px;font-weight:normal;color:#000;">PVINV</div>
<div class="t" style="left:218px;top:477px;font-size:11px;font-weight:bold;color:#000;-webkit-text-stroke:0.12px #fff;">WT:</div>
<div class="t" style="left:270px;top:478px;font-size:11px;font-weight:normal;color:#000;">PM</div>
<div class="t" style="left:398px;top:425px;font-size:11px;font-weight:bold;color:#000;-webkit-text-stroke:0.12px #fff;">Location:</div>
<div class="t" style="left:501px;top:427px;font-size:11px;font-weight:normal;color:#000;"><b style="color:#0a0aff;-webkit-text-stroke:0.12px #fff">S-1006</b> Bellingham, WA</div>
<div class="t" style="left:398px;top:440px;font-size:11px;font-weight:bold;color:#000;-webkit-text-stroke:0.12px #fff;">Request Type:</div>
<div class="t" style="left:501px;top:441px;font-size:11px;font-weight:normal;color:#000;">EXTERIOR</div>
<div class="t" style="left:398px;top:454px;font-size:11px;font-weight:bold;color:#000;-webkit-text-stroke:0.12px #fff;">Request Code:</div>
<div class="t" style="left:501px;top:455px;font-size:11px;font-weight:normal;color:#000;">Landscaping-Preventative Maintenance</div>
<div class="t" style="left:398px;top:468px;font-size:11px;font-weight:bold;color:#000;-webkit-text-stroke:0.12px #fff;">Vendor:</div>
<div class="t" style="left:501px;top:470px;font-size:11px;font-weight:bold;color:#0a0aff;-webkit-text-stroke:0.12px #fff;">Facility Source Landscape</div>
<div class="t" style="left:750px;top:425px;font-size:11px;font-weight:bold;color:#000;-webkit-text-stroke:0.12px #fff;">DNE:</div>
<div class="t" style="left:800px;top:426px;font-size:11px;font-weight:normal;color:#000;">USD 335.94</div>
<div class="t" style="left:750px;top:439px;font-size:11px;font-weight:bold;color:#000;-webkit-text-stroke:0.12px #fff;">Quote 1:</div>
<div class="t" style="left:800px;top:440px;font-size:11px;font-weight:bold;color:#0a0aff;-webkit-text-stroke:0.12px #fff;">None</div>
<div class="t" style="left:750px;top:453px;font-size:11px;font-weight:bold;color:#000;-webkit-text-stroke:0.12px #fff;">Quote 2:</div>
<div class="t" style="left:800px;top:454px;font-size:11px;font-weight:bold;color:#0a0aff;-webkit-text-stroke:0.12px #fff;">None</div>
<div class="t" style="left:750px;top:467px;font-size:11px;font-weight:bold;color:#000;-webkit-text-stroke:0.12px #fff;">Invoice:</div>
<div class="t" style="left:800px;top:468px;font-size:11px;font-weight:bold;color:#0a0aff;-webkit-text-stroke:0.12px #fff;">Add</div>
<svg style="position:absolute;left:188px;top:424px" width="145" height="25" viewBox="0 0 145 25">
<defs>
<linearGradient id="bg419" x1="0" y1="0" x2="0" y2="1"><stop offset="0" stop-color="#b9cdee"/><stop offset="0.45" stop-color="#4f7fd0"/><stop offset="1" stop-color="#1546b0"/></linearGradient>
</defs>
<path d="M3.9 20.6 L7.6 5" stroke="#2e2e2e" stroke-width="1.5" fill="none"/>
<path d="M7.3 4.2 C9 3.2 11 3.4 12.2 4.6 C13.3 5.8 14.5 8.5 15.8 8.9 L17.9 8.2 L17 11 C16.2 13.5 15.2 15.5 14.2 15.8 C13 15.5 12 14.4 11 13.5 C9.6 12.2 7.8 11.6 5.5 12.6 Z" fill="#bf0000"/>
<path d="M21.6 17.6 C22.5 16.8 23.5 16.2 24.1 15.5 C25 14.5 26 12.8 26.9 11.9 C27.8 10.8 28.5 9.8 29.3 9.3 C30 8.6 30.6 8.1 31.5 8 L34.8 8.1 L35.9 9 L36.1 11 L34.8 12.1 L32 12.6 C31 12.9 30.2 13.3 29.3 13.9 C28.3 14.6 27.3 15.2 26.5 15.9 C25.8 16.6 25.2 17.4 24.5 18 C23.5 18.8 22 18.8 21.6 17.6 Z" fill="#000"/><path d="M35.2 8.6 Q35.6 6.4 36.7 5.9 Q37.9 5.8 37.8 7.3" stroke="#2a2a2a" stroke-width="1.5" fill="none"/>
<g transform="translate(40,0)">
<rect x="2.5" y="4.5" width="14" height="15.8" rx="1" fill="#fff" stroke="#9a9a9a" stroke-width="1"/>
<rect x="2.6" y="4.6" width="13.6" height="5" fill="#1e50b6"/>
<rect x="5.3" y="2" width="1.2" height="2.6" fill="#c8c8c8"/>
<rect x="12.2" y="2" width="1.2" height="2.6" fill="#c8c8c8"/>
<rect x="2.5" y="19.5" width="14" height="1.2" fill="#b0b0b0"/>
<path d="M5.2 12.6 L6.6 11 H7.9 V18 H6.3 V13.4 L5.2 14 Z" fill="#000"/><path d="M9.4 13 Q9.7 11.3 11.1 11.3 Q12.6 11.3 12.6 12.8 Q12.6 14.1 10.2 17 H13.3" stroke="#000" stroke-width="1.7" fill="none" stroke-linejoin="round"/>
<circle cx="30.2" cy="12" r="8" fill="url(#bg419)"/>
<rect x="28.8" y="9" width="2.4" height="1.3" fill="#fff"/>
<rect x="28.8" y="11.6" width="2.4" height="5.3" fill="#fff"/>
</g>
<g transform="translate(80,0)" fill="#1f56c2">
<rect x="4.2" y="4" width="12.4" height="4.5" rx="0.5"/>
<path d="M4 8 H16.8 V19 H4 Z M5.1 8.9 V12.3 H15.7 V8.9 Z M7.1 13.9 V15.1 H13.9 V13.9 Z M5.1 16 V17.4 H15.7 V16 Z" fill-rule="evenodd"/>
<rect x="5.2" y="13.8" width="1.2" height="1.2" fill="#9fb6e6"/>
<rect x="14.5" y="13.8" width="1.2" height="1.2" fill="#9fb6e6"/>
<rect x="2.2" y="10.7" width="2.2" height="2.4" rx="1"/>
<rect x="16.4" y="10.7" width="2.2" height="2.4" rx="1"/>
<rect x="4.4" y="18.6" width="2.1" height="2" rx="0.7"/>
<rect x="14.4" y="18.6" width="2.1" height="2" rx="0.7"/>
</g>
<g transform="translate(80,0)">
<rect x="26.2" y="4" width="8.6" height="7.5" fill="#dcdcdc" stroke="#bdbdbd" stroke-width="0.8"/>
<rect x="24.2" y="6.2" width="2" height="4.8" fill="#7a7a7a"/>
<rect x="34.8" y="6.2" width="2" height="4.8" fill="#7a7a7a"/>
<rect x="22.6" y="11.4" width="15" height="6.6" rx="1.5" fill="#fff" stroke="#6a6a6a" stroke-width="1.1"/>
<rect x="26.1" y="11.4" width="8.7" height="3.4" fill="#555"/>
<rect x="23.2" y="14.8" width="13.8" height="1.3" fill="#c4c4c4"/>
<rect x="22.6" y="16" width="15" height="2.2" fill="#5a5a5a"/>
<rect x="25.3" y="18" width="10.4" height="2.6" fill="#fff" stroke="#666" stroke-width="1"/>
</g>
<g transform="translate(112,0)">
<circle cx="17.9" cy="11.8" r="7.9" fill="url(#bg419)"/>
<path d="M14.7 8.3 H17.6 C20 8.3 21.1 9.7 21.1 12 C21.1 14.3 20 15.7 17.6 15.7 H14.7 Z M16.6 9.9 V14.1 H17.4 C18.6 14.1 19.1 13.4 19.1 12 C19.1 10.6 18.6 9.9 17.4 9.9 Z" fill="#fff" fill-rule="evenodd"/>
</g>
</svg>
<svg style="position:absolute;left:0;top:0;filter:drop-shadow(4px 5px 2.5px rgba(0,0,0,0.55))" width="949" height="505"><path d="M262.9 80.4 L157.5 160.8" stroke="#fe6500" stroke-width="3.7" fill="none"/><path d="M145.7 170.5 L153.2 155.8 L161.9 166.9 Z" fill="#fe6500"/></svg>
</body></html>
